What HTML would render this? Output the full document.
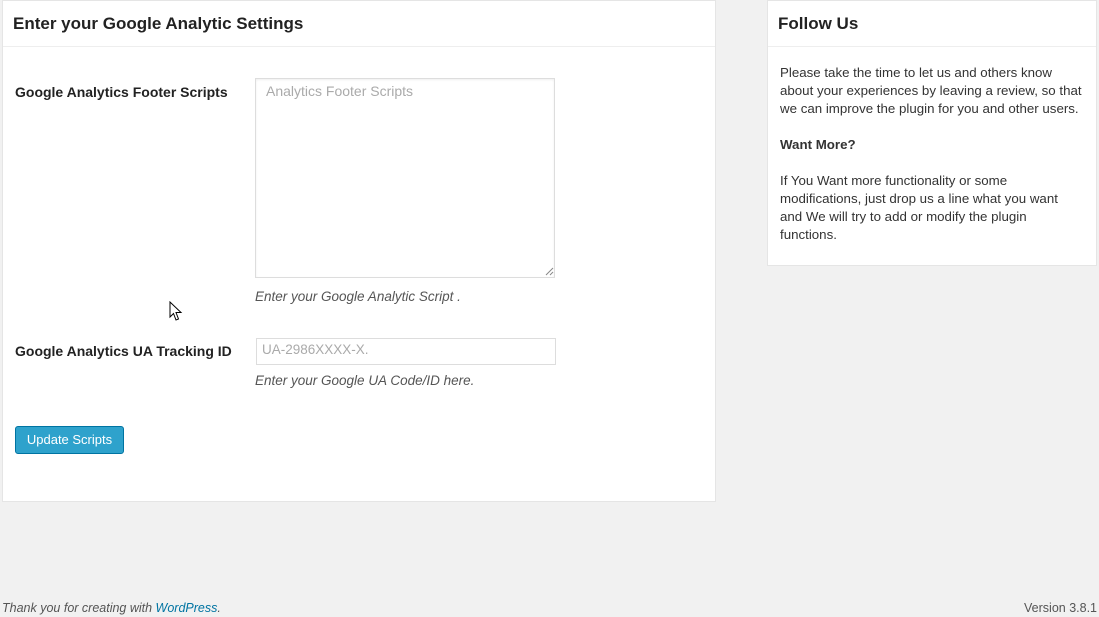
<!DOCTYPE html>
<html><head><meta charset="utf-8"><style>
body{margin:0;width:1099px;height:617px;background:#f1f1f1;font-family:"Liberation Sans",Arial,sans-serif;color:#222;position:relative;overflow:hidden}
.a{position:absolute}
.panel{position:absolute;background:#fff;border:1px solid #e5e5e5;box-sizing:border-box}
.hd{position:absolute;left:0;right:0;top:0;height:45px;border-bottom:1px solid #eee}
.hd span{position:absolute;left:10px;top:13px;font-size:17px;font-weight:bold;color:#222}
.lbl{font-size:14px;font-weight:bold;color:#222}
.desc{font-size:13.5px;font-style:italic;color:#555}
.p{font-size:13.3px;line-height:18px;color:#333;white-space:nowrap}
</style></head><body>
<div class="panel" style="left:2px;top:0;width:714px;height:502px">
 <div class="hd"><span>Enter your Google Analytic Settings</span></div>
</div>
<div class="a lbl" style="left:15px;top:84px">Google Analytics Footer Scripts</div>
<div class="a" style="left:255px;top:78px;width:300px;height:200px;border:1px solid #ddd;box-sizing:border-box;box-shadow:inset 0 1px 2px rgba(0,0,0,.07)"></div>
<div class="a" style="left:266px;top:83px;font-size:14px;color:#aaa">Analytics Footer Scripts</div>
<svg class="a" style="left:545px;top:267px" width="9" height="9"><path d="M1 8L8 1M5 8L8 5" stroke="#888" stroke-width="1"/></svg>
<div class="a desc" style="left:255px;top:289px">Enter your Google Analytic Script .</div>
<svg class="a" style="left:169px;top:301px" width="14" height="22"><path d="M1 1L1 16L4.5 12.5L7 19L9.5 18L7 11.5L12 11.5Z" fill="#fff" stroke="#000" stroke-width="1"/></svg>
<div class="a lbl" style="left:15px;top:343px">Google Analytics UA Tracking ID</div>
<div class="a" style="left:256px;top:338px;width:300px;height:27px;border:1px solid #ddd;box-sizing:border-box"></div>
<div class="a" style="left:262px;top:342px;font-size:13.5px;color:#aaa">UA-2986XXXX-X.</div>
<div class="a desc" style="left:255px;top:373px">Enter your Google UA Code/ID here.</div>
<div class="a" style="left:15px;top:426px;width:109px;height:28px;background:#2ea2cc;border:1px solid #0074a2;box-sizing:border-box;border-radius:3px;color:#fff;font-size:13px;text-align:center;line-height:26px">Update Scripts</div>
<div class="panel" style="left:767px;top:0;width:330px;height:266px">
 <div class="hd"><span>Follow Us</span></div>
</div>
<div class="a p" style="left:780px;top:64px">Please take the time to let us and others know<br>about your experiences by leaving a review, so that<br>we can improve the plugin for you and other users.<br><br><b>Want More?</b><br><br>If You Want more functionality or some<br>modifications, just drop us a line what you want<br>and We will try to add or modify the plugin<br>functions.</div>
<div class="a" style="left:2px;top:601px;font-size:12.5px;font-style:italic;color:#555">Thank you for creating with <span style="color:#0074a2">WordPress</span>.</div>
<div class="a" style="right:2px;top:601px;font-size:12.5px;color:#555">Version 3.8.1</div>
</body></html>
